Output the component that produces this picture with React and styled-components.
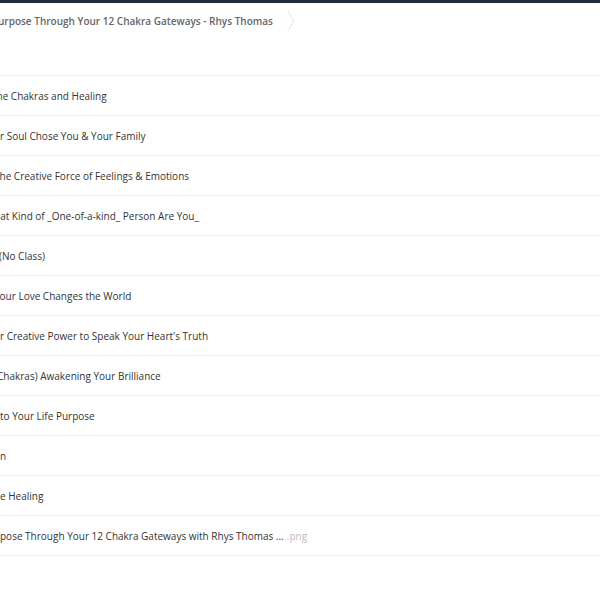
import React from 'react'
import styled, { createGlobalStyle } from 'styled-components'

const Global = createGlobalStyle`
  body {
    margin: 0;
    background: #fff;
    font-family: "Open Sans", "Liberation Sans", sans-serif;
  }
`

const Page = styled.div`
  width: 600px;
  height: 600px;
  overflow: hidden;
  display: flex;
  flex-direction: column;
`

const TopBar = styled.div`
  height: 3px;
  background: #1e2b3b;
`

const Crumbs = styled.div`
  height: 35px;
  display: flex;
  align-items: center;
  gap: 14px;
`

const Crumb = styled.span`
  font-size: 10px;
  font-weight: 600;
  color: #666;
  white-space: nowrap;
  margin-left: ${p => p.shift || 0}px;
`

const Chevron = () => (
  <svg width="8" height="20" viewBox="0 0 8 20">
    <path d="M1 0 L7 10 L1 20" fill="none" stroke="#e3e3e3" strokeWidth="1" />
  </svg>
)

const List = styled.div`
  margin-top: 37px;
  border-top: 1px solid #efefef;
`

const Row = styled.div`
  box-sizing: border-box;
  height: 40px;
  padding-top: 1px;
  border-bottom: 1px solid #efefef;
  display: flex;
  align-items: center;
  white-space: nowrap;
  overflow: hidden;
`

const Name = styled.span`
  font-size: 10px;
  color: #333;
  margin-left: ${p => p.shift || 0}px;
`

const Ext = styled.span`
  color: #bbb;
  margin-left: 3px;
`

const rows = [
  { t: 'The Chakras and Healing', s: -9 },
  { t: 'r Soul Chose You & Your Family', s: 0 },
  { t: 'The Creative Force of Feelings & Emotions', s: -6 },
  { t: 'hat Kind of _One-of-a-kind_ Person Are You_', s: -6 },
  { t: '(No Class)', s: -1 },
  { t: 'Your Love Changes the World', s: -6 },
  { t: 'r Creative Power to Speak Your Heart\'s Truth', s: 0 },
  { t: 'Chakras) Awakening Your Brilliance', s: -3 },
  { t: 'to Your Life Purpose', s: 0 },
  { t: 'n', s: 0 },
  { t: 'e Healing', s: 0 },
  { t: 'pose Through Your 12 Chakra Gateways with Rhys Thomas ...', s: 0, ext: '.png' },
]

export default function App() {
  return (
    <Page>
      <Global />
      <TopBar />
      <Crumbs>
        <Crumb shift={-2}>urpose Through Your 12 Chakra Gateways - Rhys Thomas</Crumb>
        <Chevron />
      </Crumbs>
      <List>
        {rows.map((r, i) => (
          <Row key={i}>
            <Name shift={r.s}>
              {r.t}
              {r.ext && <Ext>{r.ext}</Ext>}
            </Name>
          </Row>
        ))}
      </List>
    </Page>
  )
}
